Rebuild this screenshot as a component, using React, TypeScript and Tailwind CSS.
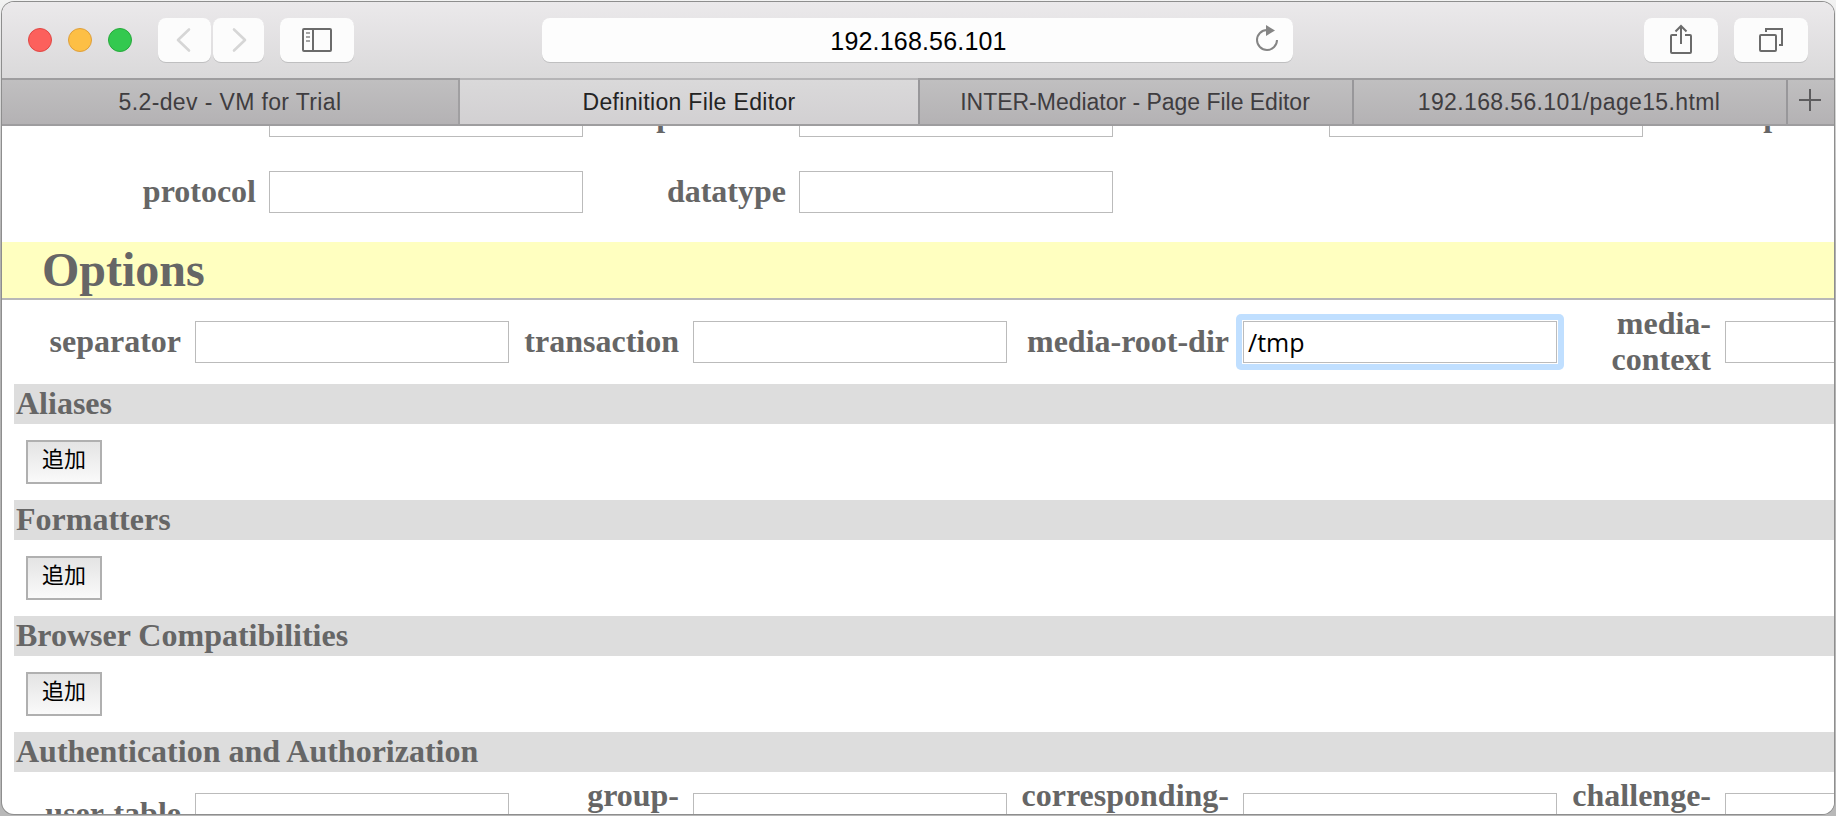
import type { ReactNode } from "react";

function Label({ className, children }: { className: string; children: ReactNode }) {
  return <div className={`shrink-0 text-right ${className}`}>{children}</div>;
}

function Box() {
  return <div className="h-[42px] w-[314px] shrink-0 border border-[#bbbbbb] bg-white" />;
}

function ToolButton({ className, children }: { className: string; children: ReactNode }) {
  return (
    <div className={`flex h-11 shrink-0 items-center justify-center rounded-lg bg-[#fcfcfc] shadow-[0_1px_0_#bfbfc0] ${className}`}>
      {children}
    </div>
  );
}

function SectionTitle({ children }: { children: ReactNode }) {
  return <h2 className="ml-3 h-10 bg-[#dddddd] px-0.5 pt-px">{children}</h2>;
}

function Section({ title }: { title: string }) {
  return (
    <section>
      <SectionTitle>{title}</SectionTitle>
      <div className="flex h-[76px] items-center pl-6">
        <button className="flex h-11 w-[76px] items-center justify-center border-2 border-[#b0b0b0] bg-linear-to-b from-[#e4e4e4] to-[#fafafa] pb-2.5 font-['Noto_Sans_CJK_JP',sans-serif] text-[22px] leading-[30px] font-normal text-black">
          追加
        </button>
      </div>
    </section>
  );
}

export default function App() {
  return (
    <div className="h-[816px] w-[1836px] overflow-hidden bg-linear-to-b from-[#f2f2f2] via-[#b0b0b0] via-30% to-[#b8b8b8] px-0.5 pt-0.5 pb-0.5">
      <div className="flex h-[812px] flex-col overflow-hidden rounded-xl bg-white shadow-[0_0_0_1px_#8e8e8e]">
        <header className="flex h-[76px] shrink-0 items-start bg-linear-to-b from-[#ebe9eb] to-[#dad9da] pt-4 font-['Liberation_Sans',Arial,sans-serif]">
          <div className="ml-[26px] flex h-11 gap-4 pt-[10px]">
            <div className="size-6 rounded-full border border-[#e04744] bg-[#fc605c]" />
            <div className="size-6 rounded-full border border-[#de9f3c] bg-[#fdbf45]" />
            <div className="size-6 rounded-full border border-[#27a93b] bg-[#33c94f]" />
          </div>
          <ToolButton className="ml-[26px] w-[53px]">
            <svg width="16" height="26" viewBox="0 0 16 26" fill="none" stroke="#d6d6d6" strokeWidth="2.6" strokeLinecap="round" strokeLinejoin="round" className="-ml-1">
              <path d="M14 2.5 L3 13 L14 23.5" />
            </svg>
          </ToolButton>
          <ToolButton className="ml-0.5 w-[51px]">
            <svg width="16" height="26" viewBox="0 0 16 26" fill="none" stroke="#d6d6d6" strokeWidth="2.6" strokeLinecap="round" strokeLinejoin="round" className="ml-0.5">
              <path d="M2 2.5 L13 13 L2 23.5" />
            </svg>
          </ToolButton>
          <ToolButton className="ml-4 w-[74px]">
            <svg width="30" height="24" viewBox="0 0 30 24" fill="none" stroke="#6b6b6b" strokeWidth="2">
              <rect x="1" y="1" width="28" height="22" rx="1" />
              <path d="M11 1 V23" />
              <path d="M4 5 H8 M4 9 H8 M4 13 H8" stroke="#a5a5a5" />
            </svg>
          </ToolButton>
          <div className="ml-[188px] flex h-11 w-[751px] items-center rounded-lg bg-[#fdfdfd] pr-[13px] shadow-[0_1px_0_#bfbfc0]">
            <span className="flex-1 pt-[3px] pl-[41px] text-center text-[25px] tracking-[0.18px] text-black">192.168.56.101</span>
            <svg width="26" height="30" viewBox="0 0 26 30" fill="none" className="mb-0.5">
              <path d="M23 16 A10 10 0 1 1 13 6" stroke="#858585" strokeWidth="2" />
              <path d="M12 1 L21 6.5 L12 12 Z" fill="#858585" />
            </svg>
          </div>
          <ToolButton className="ml-[351px] w-[74px]">
            <svg width="24" height="32" viewBox="0 0 24 32" fill="none" stroke="#6b6b6b" strokeWidth="2" className="mb-[3px]">
              <path d="M8 12 H3 Q2 12 2 13 V29 Q2 30 3 30 H21 Q22 30 22 29 V13 Q22 12 21 12 H16" />
              <path d="M12 21 V3 M6.5 8.5 L12 3 L17.5 8.5" />
            </svg>
          </ToolButton>
          <ToolButton className="ml-4 w-[74px]">
            <svg width="26" height="26" viewBox="0 0 26 26" fill="none" stroke="#6b6b6b" strokeWidth="2">
              <rect x="2" y="8" width="16" height="16" rx="1" />
              <path d="M8 5 V2 H24 V18 H21" />
            </svg>
          </ToolButton>
        </header>

        <nav className="flex h-12 shrink-0 border-y-2 border-[#9e9d9f] bg-linear-to-b from-[#c0bfc0] to-[#b4b2b4] text-center font-['Liberation_Sans',Arial,sans-serif] text-[23px] leading-[44px] text-[#3f3d40]">
          <div className="w-[458px] border-r-2 border-[#a09fa1] tracking-[0.37px]">5.2-dev - VM for Trial</div>
          <div className="-mt-0.5 w-[458px] border-t-2 border-[#b5b4b6] bg-linear-to-b from-[#dad9da] to-[#d2d0d2] tracking-[0.33px] text-[#232323]">Definition File Editor</div>
          <div className="w-[436px] border-x-2 border-[#98979a] pr-0.5 tracking-[-0.02px]">INTER-Mediator - Page File Editor</div>
          <div className="w-[434px] border-r-2 border-[#98979a] pr-0.5 tracking-[0.37px]">192.168.56.101/page15.html</div>
          <div className="flex flex-1 items-center justify-center pr-0.5 pb-1">
            <svg width="22" height="22" viewBox="0 0 22 22" stroke="#5d5c5e" strokeWidth="2">
              <path d="M11 0 V22 M0 11 H22" />
            </svg>
          </div>
        </nav>

        <main className="min-h-0 flex-1 overflow-hidden font-['Liberation_Serif','Times_New_Roman',serif] text-[32px] leading-9 font-bold text-[#666666]">
          <div className="-mt-[48px] flex h-[76px] items-center">
            <Label className="w-[267px] pr-[13px] pb-0.5">user</Label><Box />
            <Label className="w-[216px] pr-[13px] pb-0.5">password</Label><Box />
            <Label className="w-[216px] pr-[13px] pb-0.5">server</Label><Box />
            <Label className="w-[192px] pr-[13px] pb-0.5">port</Label>
          </div>
          <div className="mb-3 flex h-[76px] items-center">
            <Label className="w-[267px] pr-[13px] pb-0.5">protocol</Label><Box />
            <Label className="w-[216px] pr-[13px] pb-0.5">datatype</Label><Box />
          </div>
          <h1 className="h-[58px] border-b-2 border-[#b8b8b8] bg-[#ffffc0] pl-10 text-[48px] leading-[56px]">Options</h1>
          <div className="flex h-[84px] items-center">
            <Label className="w-[193px] pr-[14px] pb-0.5">separator</Label><Box />
            <Label className="w-[184px] pr-[14px] pb-0.5">transaction</Label><Box />
            <Label className="w-[236px] pr-[14px] pb-0.5 whitespace-nowrap">media-root-dir</Label>
            <div className="-m-[7px] shrink-0 rounded-[5px] bg-[#c0dfff] p-1.5">
              <div className="bg-white p-px">
                <div className="h-[42px] w-[314px] border border-[#bbbbbb] bg-white pl-1 font-['Open_Sans','Noto_Sans',sans-serif] text-[25px] leading-[40px] font-normal text-black">/tmp</div>
              </div>
            </div>
            <Label className="w-[168px] pr-[14px] pb-0.5">media-<br />context</Label><Box />
          </div>
          <Section title="Aliases" />
          <Section title="Formatters" />
          <Section title="Browser Compatibilities" />
          <SectionTitle>Authentication and Authorization</SectionTitle>
          <div className="flex h-[84px] items-center">
            <Label className="w-[193px] pr-[14px] pb-0.5 whitespace-nowrap">user-table</Label><Box />
            <Label className="w-[184px] pr-[14px] pb-0.5">group-<br />table</Label><Box />
            <Label className="w-[236px] pr-[14px] pb-0.5">corresponding-<br />table</Label><Box />
            <Label className="w-[168px] pr-[14px] pb-0.5">challenge-<br />table</Label><Box />
          </div>
        </main>
      </div>
    </div>
  );
}
